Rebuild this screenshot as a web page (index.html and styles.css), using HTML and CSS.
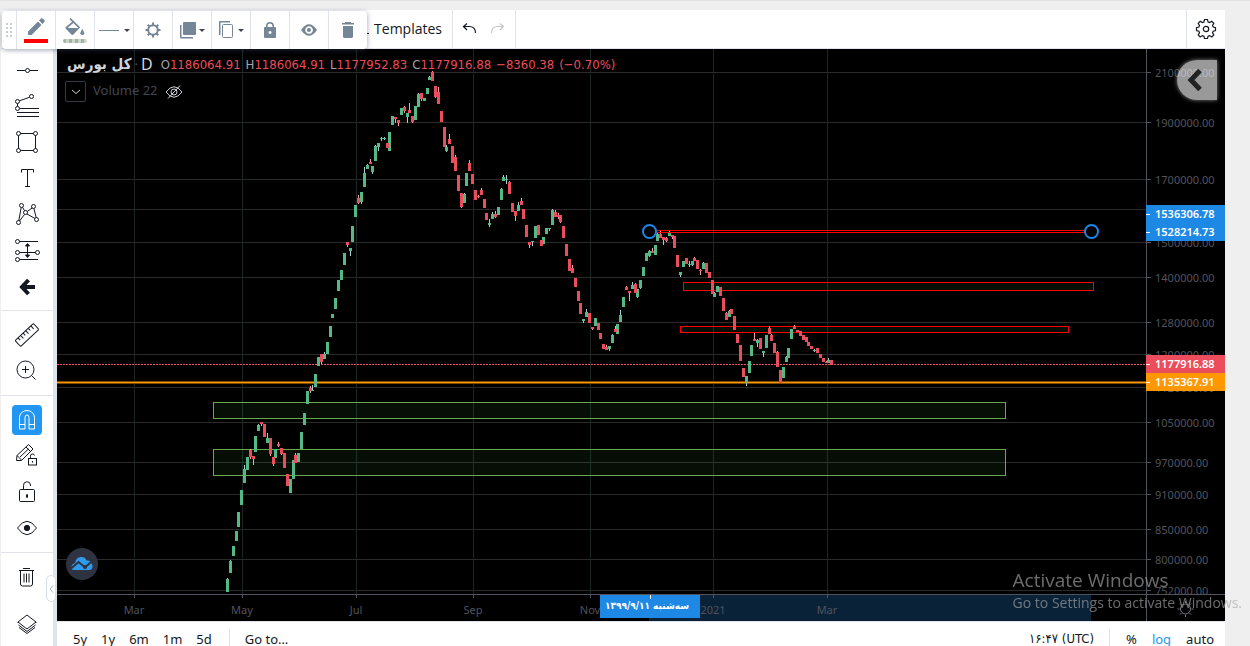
FILE: index.html
```html
<!DOCTYPE html>
<html lang="en">
<head>
<meta charset="utf-8">
<title>Chart</title>
<link rel="stylesheet" href="styles.css">
</head>
<body>
<div class="app">
  <header class="topbar">
    <button class="top-btn templates" type="button">
      <svg class="tpl-icon" width="8" height="24"><path d="M0 10l4-5M0 4l4-4M0 17.500h7M2.500 13v9" /></svg>
      Templates</button>
    <div class="history">
      <button class="top-btn" type="button" aria-label="Undo"><svg width="16" height="14"><path class="ink" d="M5 1.500L1.500 4.500L5 8M1.500 4.500H8Q13.500 5 13.500 11"/></svg></button>
      <button class="top-btn" type="button" aria-label="Redo"><svg width="16" height="14"><path class="ink faded" d="M10 1.500L13.500 4.500L10 8M13.500 4.500H7Q1.500 5 1.500 11"/></svg></button>
    </div>
    <button class="top-btn settings" type="button" aria-label="Settings"><svg width="22" height="22" viewBox="0 0 22 22"><path class="ink" d="M9.500 1.500h3l.6 2.500 1.500.6 2.200-1.300 2 2-1.300 2.200.7 1.500 2.300.6v3l-2.300.6-.7 1.500 1.300 2.200-2 2-2.200-1.300-1.500.6-.6 2.300h-3l-.6-2.300-1.500-.6-2.200 1.300-2-2 1.300-2.200-.7-1.500-2.300-.6v-3l2.300-.6.7-1.500-1.300-2.200 2-2 2.200 1.300 1.500-.6z"/><circle class="ink" cx="11" cy="11" r="2.700"/></svg></button>
  </header>

  <nav class="sidebar" aria-label="Drawing tools">
    <div class="tools">
      <button type="button" aria-label="Trend line"><svg width="30" height="30"><path d="M5 15.500h8M18 15.500h8"/><circle cx="15.500" cy="15.500" r="2"/></svg></button>
      <button type="button" aria-label="Pitchfork"><svg width="30" height="30"><path d="M7.500 9.800l10-3.500M5.500 12.500v3M7.500 17.500H27M5 21.500h22M5 25.500h22"/><circle cx="5.500" cy="10.500" r="2"/><circle cx="19.500" cy="5.500" r="2"/><circle cx="5.500" cy="17.500" r="2"/></svg></button>
      <button type="button" aria-label="Rectangle"><svg width="30" height="30"><path d="M8.500 6.500h13M8.500 23.500h13M6.500 8.500v13M23.500 8.500v13"/><circle cx="6.500" cy="6.500" r="2"/><circle cx="23.500" cy="6.500" r="2"/><circle cx="6.500" cy="23.500" r="2"/><circle cx="23.500" cy="23.500" r="2"/></svg></button>
      <button type="button" aria-label="Text"><svg width="30" height="30"><path d="M9.500 9.500v-3h12v3M15.500 6.500v17M13 23.500h5"/></svg></button>
      <button type="button" aria-label="Pattern"><svg width="30" height="30"><path d="M9.200 8.500l-2.400 13M10.500 8.200l2 3.500M20.200 9l-5 3.500M21.900 9.500l2.300 9M12.500 15.500l-5 6.500M15 15l8 4.500"/><circle cx="9.500" cy="6.500" r="2"/><circle cx="21.500" cy="7.500" r="2"/><circle cx="13.500" cy="13.500" r="2"/><circle cx="6.500" cy="23.500" r="2"/><circle cx="24.500" cy="20.500" r="2"/></svg></button>
      <button type="button" aria-label="Long position"><svg width="30" height="30"><path d="M7.500 6.500H26M7.500 17.500h16M7.500 24.500H26M15.500 9v13"/><path class="solid" d="M15.500 8.500l2 2.500h-4zM15.500 22.500l2-2.500h-4z"/><circle cx="5.500" cy="6.500" r="2"/><circle cx="5.500" cy="17.500" r="2"/><circle cx="25.500" cy="17.500" r="2"/><circle cx="5.500" cy="24.500" r="2"/></svg></button>
      <button type="button" aria-label="Back"><svg width="30" height="30"><path class="thick" d="M16.500 9L10 16l6.500 7M10 16h13"/></svg></button>
    </div>
    <div class="tools">
      <button type="button" aria-label="Measure"><svg width="30" height="30"><g transform="rotate(-43 15 15)"><rect x="2.500" y="11" width="25" height="8" rx="1"/><path d="M6.500 11v3M10 11v4M13.500 11v3M17 11v4M20.500 11v3M24 11v4"/></g></svg></button>
      <button type="button" aria-label="Zoom in"><svg width="30" height="30"><circle cx="13.500" cy="13.500" r="8.500"/><path d="M10 13.500h7M13.500 10v7M19.500 19.500l4 4"/></svg></button>
    </div>
    <div class="tools">
      <button class="active" type="button" aria-label="Magnet mode"><svg width="30" height="30"><path d="M7.500 24V12.500a7.500 7 0 0 1 15 0V24h-5.500V12.500a2 2.500 0 0 0-4 0V24zM7.500 19.500H13M17 19.500h5.500"/></svg></button>
      <button type="button" aria-label="Stay in drawing mode"><svg width="30" height="30"><path d="M4.500 19.500l.5-5L16.500 3.500l4.500 4.500L9.500 19.500zM14 6l4.500 4.500M5 14.500l4.500 4.500M8 16l8.500-8"/><rect class="paper" x="16.500" y="17.500" width="8" height="6.500"/><path d="M18.500 17v-1.500a2 2 0 0 1 4-1M20.500 20v1.500"/></svg></button>
      <button type="button" aria-label="Lock drawings"><svg width="30" height="30"><rect x="7.500" y="12.500" width="15" height="12" rx="1"/><path d="M11.500 12V8.500a3.500 3.500 0 0 1 7-.5v1M15 17v4" /><path class="solid" d="M14.500 18h1v2h-1z"/></svg></button>
      <button type="button" aria-label="Hide drawings"><svg width="30" height="30"><path d="M5.500 15Q15 1.500 24.500 15Q15 28.500 5.500 15z"/><circle class="solid" cx="15" cy="15" r="2.700"/></svg></button>
    </div>
    <div class="tools">
      <button type="button" aria-label="Remove"><svg width="30" height="30"><path d="M8.500 8.500v13.500q0 2 2 2h8q2 0 2-2V8.500M7 8.500h15M11 6.500h7M12 11.500v9M14.500 11.500v9M17 11.500v9"/></svg></button>
      <button class="layers" type="button" aria-label="Object tree"><svg width="30" height="30"><path d="M15 5l9 7-9 7-9-7zM6.500 15l8.500 6.500 8.500-6.500M7 17.500l8 6 8-6M6 12v1M24 12v1"/></svg></button>
    </div>
    <button class="collapse" type="button" aria-label="Collapse"><svg width="5" height="8"><path d="M4 .5L1 4l3 3.500"/></svg></button>
  </nav>

  <main class="chart">
    <svg class="plot" role="img" aria-label="Price candles">
      <g transform="translate(-57 -49)">
        <path class="grid-h" d="M57 72.500h3000M57 122.500h3000M57 179.500h3000M57 209.500h3000M57 242.500h3000M57 277.500h3000M57 322.500h3000M57 354.500h3000M57 387.500h3000M57 422.500h3000M57 462.500h3000M57 494.500h3000M57 529.500h3000M57 559.500h3000M57 590.500h3000"/>
        <path class="grid-v" d="M134.500 49v1000M242.500 49v1000M356.500 49v1000M473.500 49v1000M590.500 49v1000M713.500 49v1000M827.500 49v1000"/>
        <g class="zone-green"><rect x="213.500" y="402.500" width="792" height="16"/><rect x="213.500" y="449.500" width="792" height="26"/></g>
        <g class="zone-red"><rect x="683.500" y="282.500" width="410" height="8"/><rect x="680.500" y="326.500" width="388" height="6"/></g>
        <path class="edge" d="M57 382.500h3000"/><path class="level" d="M57 382.500h3000"/>
        <path class="last" d="M57 364.500h3000"/>
      </g>
      <g transform="translate(-56.500 -49)">
        <path class="wick-up" d="M227 578V592M230 560V573M244 465V480M258 424V430M267 433V443M312 385V391M324 352V359M350 248V256M361 192V204M364 167V180M367 164V169M372 166V174M375 145V160M378 143V151M381 137V141M384 137V140M407 113V123M418 93V100M429 76V80M446 145V152M464 193V203M489 219V227M492 212V219M501 188V200M503 175V181M506 175V184M518 202V211M532 241V246M549 228V231M552 209V220M583 319V323M586 309V317M609 346V351M612 334V343M620 310V322M632 282V289M637 289V298M640 280V289M649 250V257M657 233V241M669 231V236M680 272V277M689 261V267M692 261V266M703 262V269M714 292V297M729 310V317M746 376V386M757 339V347M763 351V357M786 356V362M814 349V352M828 358V363"/>
        <path class="wick-down" d="M250 449V459M253 456V465M261 422V426M270 438V456M273 457V466M278 442V447M281 448V455M295 453V463M310 386V393M321 354V364M347 242V247M358 195V204M370 159V164M395 117V123M398 120V126M404 106V113M409 103V113M412 116V123M421 93V101M432 71V81M435 86V98M438 87V104M449 134V144M455 155V170M461 193V208M469 160V171M478 195V198M481 188V195M495 211V218M509 181V194M515 211V221M521 198V205M529 242V248M555 210V217M558 213V219M560 215V223M572 265V273M592 327V330M606 345V350M615 326V332M626 286V290M629 291V301M635 283V293M652 248V253M660 231V238M663 237V245M666 237V242M672 235V239M694 257V261M700 269V275M726 312V320M754 333V341M769 326V334M771 334V341M777 351V367M794 325V329M826 361V363"/>
        <path class="body-up" d="M227 579V592M230 561V573M233 546V556M236 531V541M238 512V527M241 490V505M244 469V483M247 457V470M255 436V452M258 425V431M267 438V443M275 449V458M290 479V493M293 460V479M298 453V462M301 432V449M304 413V425M307 391V404M312 390V391M315 374V387M318 357V366M324 354V359M327 342V354M330 326V337M332 314V318M335 298V309M338 280V291M341 270V280M344 253V265M350 248V251M352 226V242M355 205V217M361 192V202M364 173V187M367 165V169M372 166V172M375 146V161M378 143V147M381 138V139M384 138V139M389 132V151M392 116V125M401 108V115M407 113V117M415 106V120M418 94V107M424 98V101M427 88V94M429 77V80M446 147V151M464 194V203M466 173V186M489 223V225M492 214V219M498 207V215M501 189V200M503 177V181M506 179V180M518 205V211M532 241V242M535 226V238M543 237V244M546 228V234M549 228V229M552 210V225M583 319V321M586 312V317M595 318V326M609 346V349M612 335V343M617 324V334M620 315V322M623 297V307M632 285V289M637 289V297M640 280V288M643 267V276M646 253V261M649 251V256M655 245V255M657 234V241M669 233V236M680 272V275M683 261V267M689 264V265M692 261V265M703 263V269M714 293V297M717 286V292M729 311V317M746 376V383M749 361V373M751 345V356M757 340V343M763 351V353M766 335V348M783 367V378M786 357V362M788 348V358M791 329V339M814 350V351M828 360V363"/>
        <path class="body-down" d="M250 450V457M253 456V459M261 422V424M264 424V437M270 438V454M273 457V464M278 444V446M281 448V454M284 453V468M287 474V486M295 455V463M310 388V391M321 354V362M347 242V245M358 198V203M370 162V164M387 143V148M395 117V119M398 120V123M404 107V111M409 110V113M412 116V122M421 93V99M432 72V81M435 86V97M438 92V104M441 111V122M444 127V147M449 139V144M452 146V163M455 157V171M458 175V191M461 193V207M469 163V171M472 174V184M475 190V200M478 196V197M481 190V195M484 199V208M486 213V220M495 214V217M509 182V194M512 203V212M515 211V216M521 201V205M523 209V219M526 225V237M529 242V245M538 225V235M541 240V246M555 212V217M558 215V217M560 215V222M563 226V238M566 244V256M569 259V271M572 268V273M575 278V287M578 291V301M580 303V314M589 313V323M592 327V329M598 323V330M600 333V339M603 344V349M606 347V350M615 329V332M626 287V290M629 291V293M635 284V293M652 251V253M660 234V238M663 237V240M666 238V241M672 235V237M674 236V248M677 255V267M686 258V264M694 258V261M697 260V269M700 270V271M706 263V273M709 272V278M712 280V294M720 287V296M723 298V311M726 313V320M731 309V314M734 316V330M737 334V343M740 345V361M743 368V377M754 339V341M760 338V349M769 328V334M771 335V341M774 343V353M777 352V367M780 370V383M794 326V329M797 330V332M800 331V336M803 335V340M806 337V342M808 342V346M811 346V349M817 348V353M820 354V358M823 358V362M826 362V363M831 360V365"/>
      </g>
      <g transform="translate(-57 -49)">
        <path class="red-line" d="M656 230.500h429M656 232.500h429"/>
        <g class="handle"><circle cx="649.500" cy="231.500" r="6.500"/><circle cx="1091.500" cy="231.500" r="6.500"/></g>
      </g>
    </svg>

    <svg class="price-axis">
      <g transform="translate(-1146 -49)">
        <path class="ticks" d="M1146.500 49v1000M1147 72.500h4M1147 122.500h4M1147 179.500h4M1147 242.500h4M1147 277.500h4M1147 322.500h4M1147 354.500h4M1147 422.500h4M1147 462.500h4M1147 494.500h4M1147 529.500h4M1147 559.500h4M1147 590.500h4"/>
        <g class="tick-text">
          <text x="1155" y="77">2100000.00</text><text x="1155" y="127">1900000.00</text><text x="1155" y="184">1700000.00</text><text x="1155" y="247">1500000.00</text><text x="1155" y="282">1400000.00</text><text x="1155" y="327">1280000.00</text><text x="1155" y="359">1200000.00</text><text x="1155" y="392">1120000.00</text><text x="1155" y="427">1050000.00</text><text x="1155" y="467">970000.00</text><text x="1155" y="499">910000.00</text><text x="1155" y="534">850000.00</text><text x="1155" y="564">800000.00</text><text x="1155" y="595">752000.00</text>
        </g>
        <rect class="blue" x="1146" y="205" width="79" height="36"/><rect class="red" x="1146" y="355" width="79" height="18"/><rect class="orange" x="1146" y="373" width="79" height="18"/>
        <path class="tag-tick" d="M1146 214.500h4M1146 232.500h4M1146 364.500h4M1146 382.500h4"/>
        <g class="tag-text"><text x="1155" y="218">1536306.78</text><text x="1155" y="236">1528214.73</text><text x="1155" y="368">1177916.88</text><text x="1155" y="386">1135367.91</text></g>
      </g>
    </svg>

    <svg class="time-axis">
      <g transform="translate(-57 -594)">
        <rect class="range" x="649" y="595" width="442" height="26"/>
        <path class="ticks" d="M57 594.500h3000M134.500 595v3M242.500 595v3M356.500 595v3M473.500 595v3M590.500 595v3M713.500 595v3M827.500 595v3M1146.500 595v30"/>
        <g class="tick-text middle"><text x="134" y="614">Mar</text><text x="242" y="614">May</text><text x="356" y="614">Jul</text><text x="473" y="614">Sep</text><text x="590" y="614">Nov</text><text x="713" y="614">2021</text><text x="827" y="614">Mar</text></g>
        <rect class="blue" x="600" y="595" width="100" height="23"/><path class="tag-tick" d="M650.500 595v4"/>
        <text class="date-tag" x="647" y="609" direction="rtl">سه‌شنبه ۱۳۹۹/۹/۱۱</text>
        <g class="sun"><circle cx="1185.500" cy="609" r="5"/><path d="M1185.500 601v2M1185.500 615v2M1177.500 609h2M1191.500 609h2M1180 603.500l1.500 1.500M1189.500 613l1.500 1.500M1191 603.500l-1.500 1.500M1181.500 613l-1.500 1.500"/></g>
      </g>
    </svg>

    <div class="legend">
      <div class="legend-main"><strong class="symbol" lang="fa">کل بورس</strong><span class="dot">·</span><span class="period">D</span>
        <div class="ohlc"><span><i>O</i>1186064.91</span><span><i>H</i>1186064.91</span><span><i>L</i>1177952.83</span><span><i>C</i>1177916.88</span><span>−8360.38</span><span>(−0.70%)</span></div>
      </div>
      <div class="legend-study">
        <button type="button" aria-label="Toggle studies"><svg width="10" height="6"><path d="M1 1l4 3.500L9 1"/></svg></button>
        <span class="study-name">Volume 22</span>
        <svg class="eye-off" width="18" height="14"><path d="M1 7Q9-3.500 17 7Q9 17.500 1 7zM3 13.500L15 .5"/><circle cx="9" cy="7" r="3"/></svg>
      </div>
    </div>
    <a class="brand" href="#" aria-label="Home"><svg width="32" height="32"><path class="cloud" d="M8 22Q5 22 5.500 18.500 6 15.500 9 15l1-3q1.500-3 5.500-3 4 0 5 3.500 4-.5 4.500 2.500 2 1.500 1.500 4-.5 3-3 3z"/><path class="cloud-line" d="M5 20.500l7.500-6.500 6.500 5.500 6-5.500"/><circle class="cloud-line" cx="19" cy="19" r="1"/></svg></a>
    <button class="drawer" type="button" aria-label="Open panel"><svg width="16" height="22"><path d="M13 1.500L4 11l9 9.500"/></svg></button>
  </main>

  <footer class="bottom">
    <div class="ranges"><button type="button">5y</button><button type="button">1y</button><button type="button">6m</button><button type="button">1m</button><button type="button">5d</button></div>
    <button class="goto" type="button">Go to…</button>
    <button class="clock" type="button">۱۶:۴۷ (UTC)</button>
    <div class="scale"><button type="button">%</button><button class="on" type="button">log</button><button type="button">auto</button></div>
  </footer>

  <div class="floating" role="toolbar" aria-label="Drawing style">
    <span class="grip"><svg width="8" height="14"><path d="M1 1h2M5 1h2M1 5h2M5 5h2M1 9h2M5 9h2M1 13h2M5 13h2"/></svg></span>
    <button type="button" aria-label="Line color"><svg width="18" height="18"><path d="M1 13.500L11 3.500l3.500 3.500L4.500 17H1zM12 2.500l2-2q1-.8 2 .2l1.300 1.300q1 1 0 2l-1.800 2z"/></svg><span class="swatch"></span></button>
    <button type="button" aria-label="Fill color"><svg width="20" height="18"><path d="M4.500 1.200L5.700 0l9.500 9.300-6.800 7.200q-1 .9-2 0L.8 10.800q-.8-1 0-1.800L7.100 3.800zM8.300 5L2.500 10H13.500z" fill-rule="evenodd"/><path d="M17.300 11q4 5.500 0 6-4-.5 0-6z"/></svg><span class="swatch pale"></span></button>
    <button type="button" aria-label="Line style"><svg width="32" height="18"><path d="M1 9h20v1H1z"/><path class="caret" d="M26 8h6l-3 3z"/></svg></button>
    <button type="button" aria-label="Format"><svg width="18" height="18"><circle class="gear" cx="9" cy="9" r="4.800"/><path class="teeth" d="M9 1.500v3M9 13.500v3M1.500 9h3M13.500 9h3M3.700 3.700l2 2M12.300 12.300l2 2M14.300 3.700l-2 2M5.700 12.300l-2 2"/></svg></button>
    <button type="button" aria-label="Visual order"><svg width="26" height="18"><rect x="4" y="1" width="13" height="13" rx="1"/><path d="M1 4h1.500v12H14v1.500H2Q1 17.500 1 16.500z"/><path class="caret" d="M20 8h6l-3 3z"/></svg></button>
    <button type="button" aria-label="Clone"><svg width="26" height="18"><rect class="hollow" x="4.500" y="3.500" width="10" height="13" rx="1"/><path d="M1 1q0-1 1-1h10v1.500H2.500V14H1z"/><path class="caret" d="M20 8h6l-3 3z"/></svg></button>
    <button type="button" aria-label="Lock"><svg width="14" height="18"><path d="M3 6V5a4 4 0 0 1 8 0v1h1q1 0 1 1v9q0 1-1 1H2q-1 0-1-1V7q0-1 1-1zM4.500 6h5V5a2.500 2.500 0 0 0-5 0zM7 10a1.500 1.500 0 1 0 .1 0z" fill-rule="evenodd"/></svg></button>
    <button type="button" aria-label="Hide"><svg width="16" height="12"><path d="M0 6Q8-5.500 16 6Q8 17.500 0 6zM8 2.200a3.800 3.800 0 1 0 .1 0zM8 4a2 2 0 1 1-.1 0z" fill-rule="evenodd"/></svg></button>
    <button type="button" aria-label="Delete"><svg width="14" height="18"><path d="M4 1h6v1h3v1.500H1V2h3zM2 5h10v10.500q0 1.500-1.500 1.500h-7Q2 17 2 15.500z"/></svg></button>
  </div>
</div>
<div class="watermark" aria-hidden="true"><div class="wm-title">Activate Windows</div><div class="wm-text">Go to Settings to activate Windows.</div></div>
</body>
</html>
```

FILE: styles.css
```css
* { box-sizing: border-box; }
body {
  margin: 0;
  background: #efefef;
  font-family: "Noto Sans", "DejaVu Sans", sans-serif;
  overflow: hidden;
}
button {
  margin: 0;
  padding: 0;
  border: 0;
  background: none;
  font: inherit;
  color: inherit;
  cursor: pointer;
}
svg { display: block; flex: none; }

.app {
  position: relative;
  display: grid;
  grid-template-columns: 56px minmax(0, 1fr);
  grid-template-rows: 39px minmax(0, 1fr) 25px;
  height: 100vh;
  padding: 9px 25px 0 1px;
  border-top: 1px solid #e2e2e2;
  color: #131722;
  font-size: 13px;
}

/* Top bar */
.topbar {
  grid-column: 1 / 3;
  display: flex;
  background: #fff;
  border-bottom: 1px solid #e0e3eb;
}
.top-btn { display: flex; align-items: center; justify-content: center; }
.templates {
  width: 452px;
  padding: 0 10px 2px 0;
  gap: 4px;
  justify-content: flex-end;
  border-right: 1px solid #e0e3eb;
  font-size: 14px;
  font-family: "Open Sans", "Noto Sans", sans-serif;
}
.tpl-icon { fill: none; stroke: #131722; }
.history {
  display: flex;
  justify-content: center;
  gap: 12px;
  width: 63px;
  border-right: 1px solid #e0e3eb;
}
.settings { width: 39px; margin-left: auto; border-left: 1px solid #e0e3eb; }
.ink { fill: none; stroke: #131722; stroke-width: 1.2; }
.faded { stroke: #c4c6cb; }

/* Left tools */
.sidebar {
  grid-row: 2 / 4;
  position: relative;
  padding-top: 3px;
  background: #fff;
  border-right: 4px solid #e0e3eb;
}
.tools {
  display: flex;
  flex-direction: column;
  align-items: center;
  padding-bottom: 6px;
}
.tools + .tools { padding-top: 6px; border-top: 1px solid #e0e3eb; }
.tools button { display: grid; place-items: center; width: 36px; height: 36px; }
.tools .layers { margin-top: 12px; }
.tools svg { fill: none; stroke: #131722; stroke-width: 1; }
.tools .solid { fill: #131722; }
.tools .paper { fill: #fff; }
.tools .thick { stroke-width: 4; }
.tools .active svg { background: #2196f3; border-radius: 4px; stroke: #fff; }
.collapse {
  position: absolute;
  right: -3px;
  bottom: 44px;
  display: grid;
  place-items: center;
  width: 10px;
  height: 27px;
  background: #fff;
  border: 1px solid #d8dce6;
  border-radius: 5px;
}
.collapse svg { fill: none; stroke: #9db2bd; }

/* Chart */
.chart {
  position: relative;
  display: grid;
  grid-template-columns: minmax(0, 1fr) 79px;
  grid-template-rows: minmax(0, 1fr) 27px;
  background: #000;
}
.plot, .price-axis, .time-axis { width: 100%; height: 100%; overflow: hidden; }
.time-axis { grid-column: 1 / 3; }
.chart path, .chart circle { fill: none; }
.grid-h { stroke: #2a2a2b; }
.grid-v { stroke: #1b2726; }
.zone-green { fill: rgba(76, 175, 80, .08); stroke: #6aa84f; }
.zone-red { fill: rgba(76, 175, 80, .08); stroke: #f00; }
.edge { stroke: #7f4b00; stroke-width: 3; }
.level { stroke: #ff9800; }
.last { stroke: #f05060; stroke-dasharray: 2 1; }
.wick-up { stroke: #a9cdd3; }
.wick-down { stroke: #faa1ad; }
.body-up { stroke: #53b987; stroke-width: 3; }
.body-down { stroke: #eb4d5c; stroke-width: 3; }
.red-line { stroke: #f00; }
.handle { stroke: #1e88e5; stroke-width: 2; }
.ticks { stroke: #50535e; }
.tick-text { fill: #50535e; font-size: 11px; }
.middle { text-anchor: middle; }
.tag-text { fill: #fff; font-size: 11px; font-weight: 600; }
.tag-tick { stroke: #fff; }
.blue { fill: #1e88e5; }
.red { fill: #eb4d5c; }
.orange { fill: #ff9800; }
.range { fill: #092238; }
.date-tag {
  fill: #fff;
  font: bold 10px "DejaVu Sans Condensed", "DejaVu Sans", sans-serif;
  text-anchor: middle;
}
.sun { stroke: #787b86; }

.legend {
  position: absolute;
  top: 4px;
  left: 8px;
  color: #d1d4dc;
}
.legend-main { display: flex; align-items: center; height: 22px; padding-left: 2px; }
.symbol { font: bold 15px "DejaVu Sans Condensed", "DejaVu Sans", sans-serif; }
.dot { padding: 0 3px; color: #50535e; }
.period { font-size: 16px; }
.ohlc {
  display: flex;
  gap: 5px;
  padding-left: 8px;
  color: #eb4d5c;
  font-family: "DejaVu Sans Condensed", "Noto Sans", sans-serif;
  font-size: 13px;
}
.ohlc i { color: #a3a6af; font-style: normal; }
.legend-study {
  display: flex;
  align-items: center;
  gap: 7px;
  margin-top: 6px;
  color: #434651;
}
.legend-study button {
  display: grid;
  place-items: center;
  width: 21px;
  height: 21px;
  border: 1px solid #363a45;
  border-radius: 2px;
}
.study-name { padding-bottom: 3px; }
.legend-study svg { stroke: #d1d4dc; }

.brand {
  position: absolute;
  left: 9px;
  bottom: 41px;
  border-radius: 50%;
  background: #2f3241;
}
.chart .cloud { fill: #2f9bec; }
.cloud-line { stroke: #2f3241; stroke-width: 2; }
.drawer {
  position: absolute;
  top: 11px;
  right: 8px;
  display: grid;
  place-items: center;
  width: 40px;
  height: 40px;
  padding-right: 4px;
  background: rgba(255, 255, 255, .6);
  border-radius: 20px 0 0 20px;
  box-shadow: 0 0 4px rgba(255, 255, 255, .5);
}
.drawer svg { stroke: #222; stroke-width: 5; }

/* Bottom bar */
.bottom {
  display: flex;
  align-items: flex-start;
  height: 25px;
  padding: 7px 11px 0 16px;
  overflow: hidden;
  background: #fff;
  border-top: 1px solid #e0e3eb;
  line-height: 20px;
}
.ranges { display: flex; gap: 14px; padding-right: 17px; border-right: 1px solid #e0e3eb; }
.goto { margin-left: 15px; }
.clock { margin-left: auto; font-family: "DejaVu Sans Condensed", "Noto Sans", sans-serif; }
.scale { display: flex; gap: 15px; margin-left: 15px; padding-left: 16px; border-left: 1px solid #e0e3eb; }
.on { color: #2196f3; }

/* Floating style bar */
.floating {
  position: absolute;
  top: 10px;
  left: 2px;
  display: flex;
  height: 38px;
  background: #fff;
  border-radius: 4px;
  box-shadow: 0 1px 5px rgba(60, 70, 100, .5);
}
.floating button {
  display: flex;
  flex-direction: column;
  align-items: center;
  justify-content: center;
  gap: 3px;
  width: 39px;
  border-left: 1px solid #e0e3eb;
}
.floating svg { fill: #758696; }
.floating .caret { fill: #40444e; }
.floating .gear, .floating .hollow { fill: none; stroke: #758696; }
.floating .gear { stroke-width: 2; }
.teeth { stroke: #758696; stroke-width: 2; }
.grip { display: grid; place-items: center; width: 14px; }
.grip path { stroke: #c9ccd3; stroke-width: 2; }
.swatch { width: 24px; height: 4px; background: #f00; }
.pale { background: repeating-linear-gradient(90deg, #a3b3a3 0 3px, #ccd6cc 3px 6px); border-radius: 2px; }

.watermark {
  position: fixed;
  right: 8px;
  bottom: 32px;
  color: rgba(165, 165, 165, .66);
  font-family: "Open Sans", sans-serif;
  white-space: nowrap;
  pointer-events: none;
}
.wm-title { font-size: 19px; line-height: 24px; }
.wm-text { font-size: 14px; line-height: 22px; }
```
